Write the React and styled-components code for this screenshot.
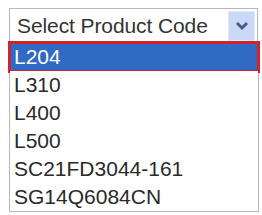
import React from "react";
import styled, { createGlobalStyle } from "styled-components";

const Global = createGlobalStyle`
  html, body { margin: 0; padding: 0; background: #ffffff; }
  body { font-family: "Liberation Sans", Arial, sans-serif; }
`;

const Wrap = styled.div`
  padding: 8px 0 0 9px;
  width: 250px;
  display: flex;
  flex-direction: column;
`;

const SelectBox = styled.div`
  box-sizing: border-box;
  width: 249px;
  height: 35px;
  border: 1px solid #b4b9c0;
  display: flex;
  align-items: center;
  justify-content: space-between;
  padding: 1px 2px 1px 7px;
  background: #fff;
`;

const SelectText = styled.span`
  font-size: 21px;
  color: #333;
  letter-spacing: -0.1px;
`;

const ArrowBtn = styled.div`
  width: 27px;
  height: 30px;
  background: #c9d8f7;
  border: 1px solid #dfe8fb;
  box-sizing: border-box;
  display: flex;
  align-items: center;
  justify-content: center;
`;

const List = styled.div`
  box-sizing: border-box;
  width: 250px;
  border: 1px solid #b4b9c0;
  border-top: none;
  display: flex;
  flex-direction: column;
`;

const Row = styled.div`
  height: 28px;
  display: flex;
  align-items: center;
  padding-left: 4px;
  font-size: 21px;
  color: ${p => (p.$active ? "#ffffff" : "#2a2a2a")};
  background: ${p => (p.$active ? "#316ac5" : "#ffffff")};
  outline: ${p => (p.$active ? "3px solid #d2232a" : "none")};
  outline-offset: -1px;
  position: relative;
`;

const items = ["L204", "L310", "L400", "L500", "SC21FD3044-161", "SG14Q6084CN"];

export default function App() {
  return (
    <>
      <Global />
      <Wrap>
        <SelectBox>
          <SelectText>Select Product Code</SelectText>
          <ArrowBtn>
            <svg width="16" height="12" viewBox="0 0 16 12">
              <path d="M3 3 L8 8 L13 3" fill="none" stroke="#4a5a80" strokeWidth="3" />
            </svg>
          </ArrowBtn>
        </SelectBox>
        <List>
          {items.map((it, i) => (
            <Row key={it} $active={i === 0}>{it}</Row>
          ))}
        </List>
      </Wrap>
    </>
  );
}
